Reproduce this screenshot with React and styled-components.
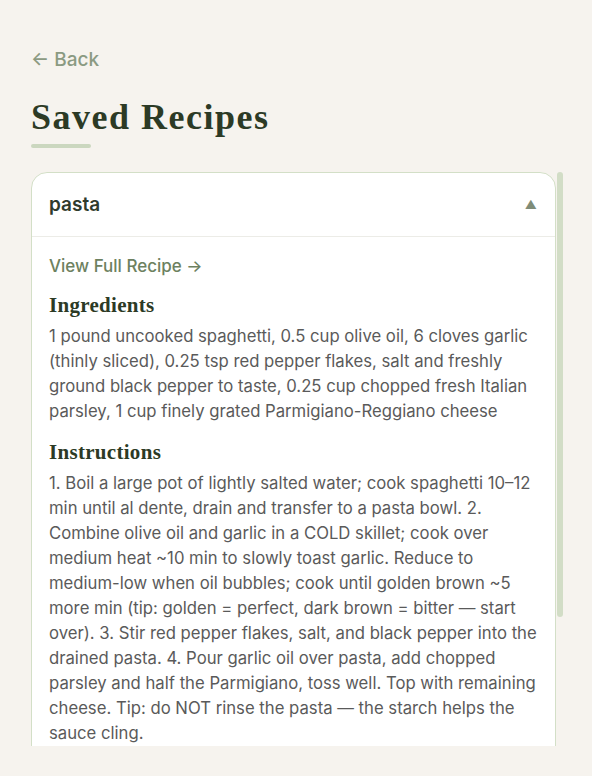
import React from "react";
import styled, { createGlobalStyle } from "styled-components";

const Global = createGlobalStyle`
  html, body { margin: 0; padding: 0; background: #f6f3ee; }
  body { font-family: Inter, "Noto Sans", sans-serif; -webkit-font-smoothing: antialiased; }
  * { box-sizing: border-box; }
`;

const Page = styled.main`
  width: 592px;
  height: 776px;
  padding: 48px 28px 0 31px;
  display: flex;
  flex-direction: column;
  overflow: hidden;
`;

const BackLink = styled.a`
  font-family: Inter, sans-serif;
  font-size: 19px;
  font-weight: 500;
  line-height: 24px;
  color: #8b9a82;
  text-decoration: none;
  align-self: flex-start;
`;

const Title = styled.h1`
  margin: 23px 0 0;
  font-family: "Liberation Serif", serif;
  font-weight: 700;
  font-size: 36px;
  line-height: 44px;
  letter-spacing: 1.5px;
  color: #2c3a25;
`;

const TitleBar = styled.div`
  width: 60px;
  height: 4px;
  margin-top: 5px;
  border-radius: 2px;
  background: #cbd7bf;
`;

const ScrollFrame = styled.div`
  margin-top: 24px;
  width: 533px;
  height: 574px;
  flex-shrink: 0;
  display: flex;
  align-items: flex-start;
`;

const Viewport = styled.div`
  width: 525px;
  height: 100%;
  overflow: hidden;
`;

const Rail = styled.div`
  width: 8px;
  height: 100%;
  display: flex;
  flex-direction: column;
  padding-left: 1px;
`;

const Thumb = styled.div`
  width: 6px;
  height: ${(p) => p.$size}px;
  border-radius: 3px;
  background: #d2ddc6;
`;

const Card = styled.section`
  background: #ffffff;
  border: 1.5px solid #d3dfc7;
  border-radius: 16px;
  overflow: hidden;
`;

const CardHeader = styled.div`
  height: 64px;
  padding: 0 18px 0 17px;
  display: flex;
  align-items: center;
  justify-content: space-between;
  border-bottom: 1px solid #ecece7;
`;

const CardName = styled.span`
  font-size: 19px;
  font-weight: 600;
  color: #2f3a2c;
`;

const Caret = styled.span`
  font-size: 12px;
  color: #7f8c78;
  line-height: 1;
`;

const CardBody = styled.div`
  padding: 19px 18px 24px 17px;
`;

const FullLink = styled.a`
  display: block;
  font-size: 17px;
  font-weight: 500;
  line-height: 20px;
  color: #6d8160;
  text-decoration: none;
`;

const SectionTitle = styled.h3`
  margin: ${(p) => p.$gap}px 0 6px;
  font-family: "Liberation Serif", serif;
  font-weight: 700;
  font-size: 21px;
  line-height: 26px;
  letter-spacing: 0.3px;
  color: #2c3a25;
`;

const Text = styled.p`
  margin: 0;
  font-size: 16.7px;
  line-height: 25px;
  color: #5a5a5a;
`;

const NoBreak = styled.span`
  white-space: nowrap;
`;

export default function App() {
  return (
    <>
      <Global />
      <Page>
        <BackLink href="#">← Back</BackLink>
        <Title>Saved Recipes</Title>
        <TitleBar />
        <ScrollFrame>
          <Viewport>
            <Card>
              <CardHeader>
                <CardName>pasta</CardName>
                <Caret>▲</Caret>
              </CardHeader>
              <CardBody>
                <FullLink href="#">View Full Recipe →</FullLink>
                <SectionTitle $gap={16}>Ingredients</SectionTitle>
                <Text>
                  1 pound uncooked spaghetti, 0.5 cup olive oil, 6 cloves garlic (thinly sliced), 0.25 tsp red pepper flakes, salt and freshly ground black pepper to taste, 0.25 cup chopped fresh Italian parsley, 1 cup finely grated Parmigiano-Reggiano cheese
                </Text>
                <SectionTitle $gap={15}>Instructions</SectionTitle>
                <Text>
                  1. Boil a large pot of lightly salted water; cook spaghetti <NoBreak>10–12</NoBreak> min until al dente, drain and transfer to a pasta bowl. 2. Combine olive oil and garlic in a COLD skillet; cook over medium heat ~10 min to slowly toast garlic. Reduce to medium-low when oil bubbles; cook until golden brown ~5 more min (tip: golden = perfect, dark brown = bitter — start over). 3. Stir red pepper flakes, salt, and black pepper into the drained pasta. 4. Pour garlic oil over pasta, add chopped parsley and half the Parmigiano, toss well. Top with remaining cheese. Tip: do NOT rinse the pasta — the starch helps the sauce cling.
                </Text>
              </CardBody>
            </Card>
          </Viewport>
          <Rail>
            <Thumb $size={445} />
          </Rail>
        </ScrollFrame>
      </Page>
    </>
  );
}
